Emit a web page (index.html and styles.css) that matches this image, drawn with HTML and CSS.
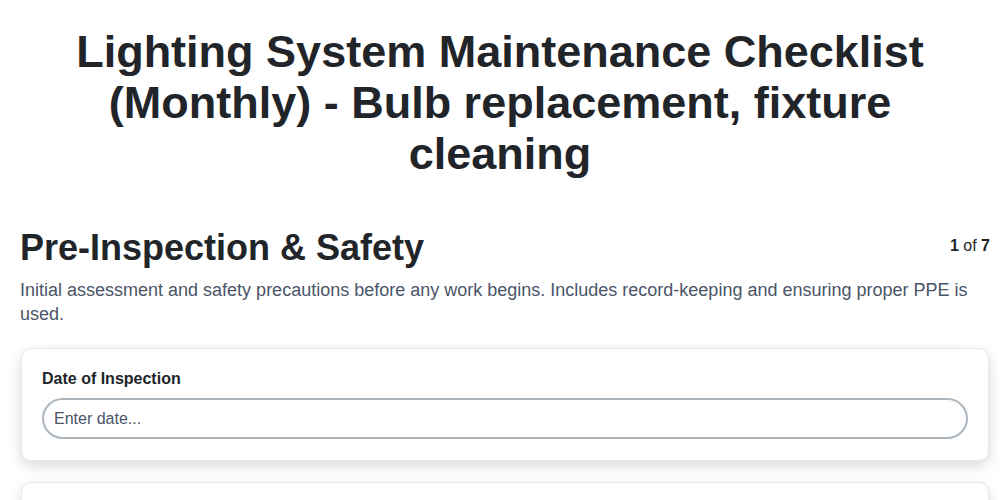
FILE: index.html
```html
<!DOCTYPE html>
<html lang="en">
<head>
<meta charset="utf-8">
<title>Lighting System Maintenance Checklist</title>
<link rel="stylesheet" href="styles.css">
</head>
<body>
  <h1 class="page-title">Lighting System Maintenance Checklist (Monthly) - Bulb replacement, fixture cleaning</h1>
  <main class="section">
    <div class="section-head">
      <h2 class="section-title">Pre-Inspection &amp; Safety</h2>
      <div class="step"><b>1</b> of <b>7</b></div>
    </div>
    <p class="section-desc">Initial assessment and safety precautions before any work begins. Includes record-keeping and ensuring proper PPE is used.</p>
    <div class="cards">
      <div class="card">
        <label class="field-label" for="date">Date of Inspection</label>
        <input class="field-input" id="date" type="text" placeholder="Enter date...">
      </div>
      <div class="card">
        <label class="field-label" for="inspector">Inspector Name</label>
        <input class="field-input" id="inspector" type="text" placeholder="Enter name...">
      </div>
    </div>
  </main>
</body>
</html>
```

FILE: styles.css
```css
* { box-sizing: border-box; }
html, body { margin: 0; padding: 0; background: #ffffff; }
body {
  font-family: "Liberation Sans", Arial, sans-serif;
  color: #212529;
}
.page-title {
  margin: 26px 0 0;
  padding: 0 40px;
  text-align: center;
  font-size: 45px;
  line-height: 51px;
  font-weight: 700;
  color: #212529;
}
.section {
  padding: 47px 10px 0 20px;
}
.section-head {
  display: flex;
  align-items: center;
  justify-content: space-between;
}
.section-title {
  margin: 0;
  font-size: 36px;
  line-height: 43px;
  font-weight: 700;
  color: #212529;
}
.step {
  font-size: 16px;
  color: #212529;
  margin-top: -3px;
}
.step b { font-weight: 700; }
.section-desc {
  margin: 9px 0 0;
  font-size: 18px;
  line-height: 24px;
  color: #4a5568;
}
.cards {
  margin-top: 22px;
  margin-left: 1px;
  margin-right: 1px;
  display: flex;
  flex-direction: column;
  gap: 21px;
}
.card {
  background: #ffffff;
  border: 1px solid #e6e6ee;
  border-radius: 10px;
  padding: 20px 20px 21px;
  box-shadow: 0 5px 14px rgba(0, 0, 0, 0.15);
}
.field-label {
  display: block;
  font-size: 16px;
  line-height: 19px;
  font-weight: 700;
  color: #212529;
  margin-bottom: 10px;
}
.field-input {
  display: block;
  width: 100%;
  height: 41px;
  border: 2px solid #adb5bd;
  border-radius: 21px;
  padding: 0 10px;
  font-family: "Liberation Sans", Arial, sans-serif;
  font-size: 16px;
  color: #212529;
  background: #ffffff;
  outline: none;
}
.field-input::placeholder { color: #4a5568; opacity: 1; }
```
